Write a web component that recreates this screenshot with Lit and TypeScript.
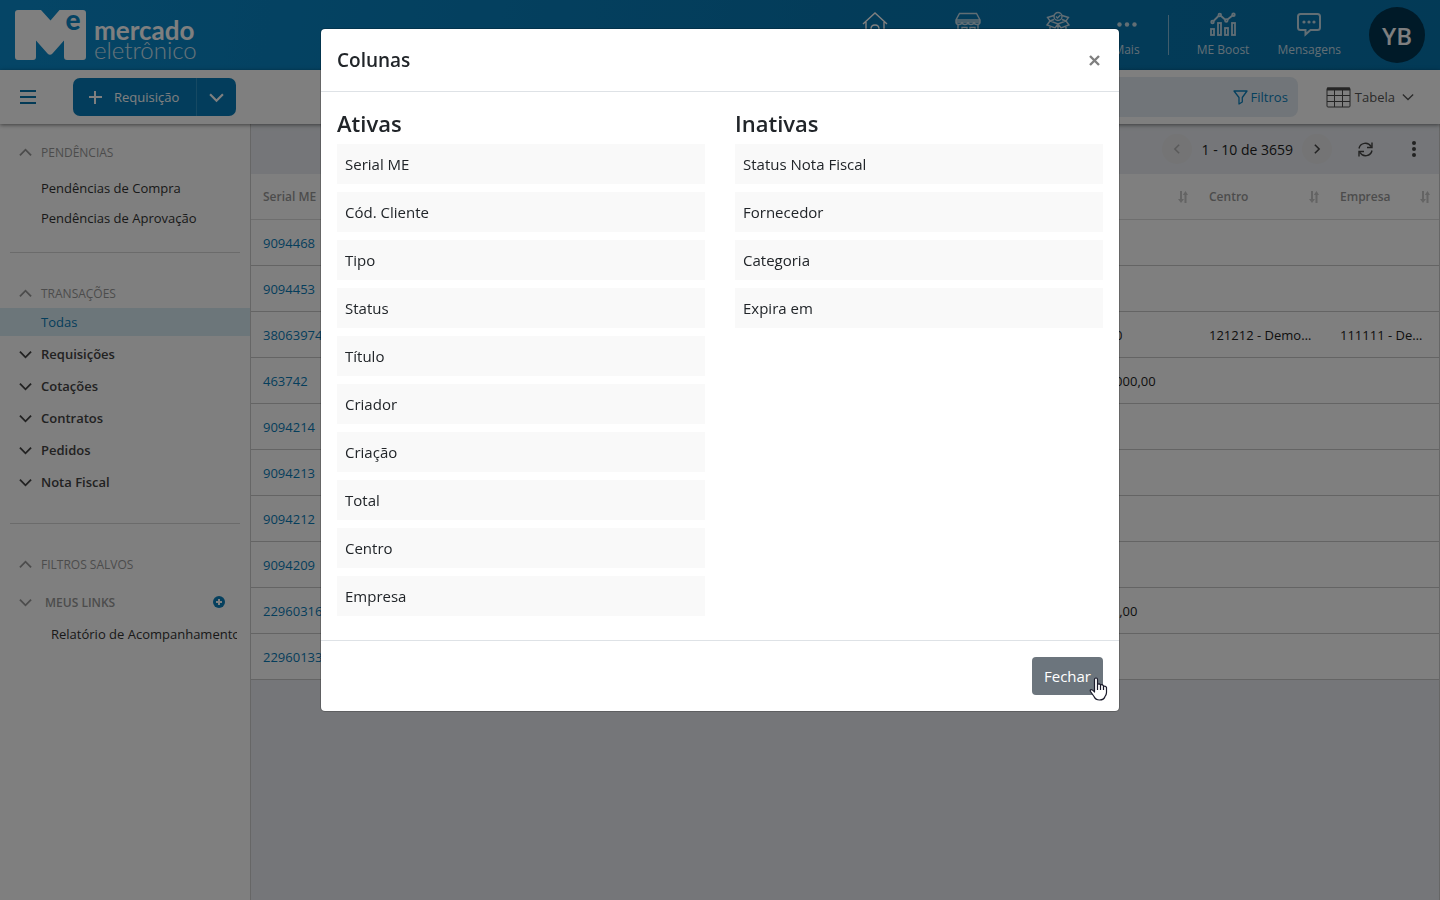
import { LitElement, html, css, svg, nothing } from "lit";
import { customElement, state } from "lit/decorators.js";

const chevron = (dir: "up" | "down" | "left" | "right", size = 13, weight = 2) => {
  const paths = {
    up: "M1 10 L7 4 L13 10",
    down: "M1 4 L7 10 L13 4",
    left: "M9.5 2 L4.5 7 L9.5 12",
    right: "M4.5 2 L9.5 7 L4.5 12",
  };
  return html`<svg width=${size} height=${size} viewBox="0 0 14 14" fill="none" stroke="currentColor" stroke-width=${weight} aria-hidden="true"><path d=${paths[dir]}></path></svg>`;
};

const icons = {
  home: svg`<path d="M1 13 L13 2 L25 13 M4 11 V26 H9 V18 Q9 14 13 14 Q17 14 17 18 V26 H22 V11"></path>`,
  store: svg`<path d="M4.500 2.500 H21.500 L25 9 V11 H1 V9 Z M1 9 H25 M1 11 Q1 13.500 4 13.500 Q7 13.500 7 11 Q7 13.500 10 13.500 Q13 13.500 13 11 Q13 13.500 16 13.500 Q19 13.500 19 11 Q19 13.500 22 13.500 Q25 13.500 25 11 M3 14 V26 H23 V14 M7 26 V16.500 H12 V26 M15 16.500 H20 V22 H15 Z"></path>`,
  box: svg`<circle cx="13" cy="5.500" r="4"></circle><path d="M11 5.500 L12.500 7 L15.500 4 M9 4.500 L2.500 6.500 L5 10 L13 13 L21 10 L23.500 6.500 L17 4.500 M5 10 L2 14 L10 17 L13 13 L16 17 L24 14 L21 10 M5 16 V23 L13 26 L21 23 V16 M13 14 V26 M5 10 L9 8.500 M21 10 L17 8.500"></path>`,
  more: svg`<g fill="currentColor" stroke="none"><circle cx="5.500" cy="13.500" r="2.200"></circle><circle cx="13" cy="13.500" r="2.200"></circle><circle cx="20.500" cy="13.500" r="2.200"></circle></g>`,
  boost: svg`<g stroke-width="1.800"><rect x="1" y="18" width="3" height="6"></rect><rect x="8" y="12" width="3" height="12"></rect><rect x="15" y="17" width="3" height="7"></rect><rect x="22" y="12" width="3" height="12"></rect><path d="M3.500 10 L8.500 5 M11 5 L15 8.500 M17.500 8.500 L22.500 4.500"></path><circle cx="2.500" cy="11" r="1.300"></circle><circle cx="9.800" cy="4" r="1.300"></circle><circle cx="16.300" cy="9.500" r="1.300"></circle><circle cx="23.500" cy="3.700" r="1.300"></circle></g>`,
  message: svg`<path stroke-width="2" d="M4.500 3 H21.500 Q24 3 24 5.500 V16.500 Q24 19 21.500 19 H14.500 L9.500 23.500 V19 H4.500 Q2 19 2 16.500 V5.500 Q2 3 4.500 3 Z"></path><g fill="currentColor" stroke="none"><circle cx="8" cy="11" r="1.600"></circle><circle cx="13" cy="11" r="1.600"></circle><circle cx="18" cy="11" r="1.600"></circle></g>`,
};

const sortIcon = html`<svg width="10" height="12" viewBox="0 0 10 12" aria-hidden="true"><path d="M2 0 H4 V8 H6 L3 12 L0 8 H2 Z" fill="currentColor"></path><path d="M6.500 12 V4 H4.800 L7.500 0 L10 4 H8.500 V12 Z" fill="currentColor"></path></svg>`;

@customElement("app-header")
class AppHeader extends LitElement {
  static styles = css`
    :host { display: flex; align-items: center; justify-content: space-between; height: 70px; padding: 0 15px; box-sizing: border-box; background: linear-gradient(100deg, #0a8bcd, #0778b3 60%, #0674ad); color: #fff; }
    .brand { display: flex; gap: 8px; align-items: flex-end; text-decoration: none; color: #fff; font-family: Lato, sans-serif; }
    .mark { display: block; overflow: visible; }
    .words { display: flex; flex-direction: column; line-height: 20px; }
    .bold { font-size: 26px; font-weight: 700; }
    .light { font-size: 24px; font-weight: 300; opacity: 0.8; }
    .nav { display: flex; gap: 28px; align-items: center; }
    .item { display: flex; flex-direction: column; align-items: center; gap: 3px; height: 48px; color: #c4dce9; text-decoration: none; font-size: 12px; line-height: 17px; white-space: nowrap; }
    .current { color: #fff; }
    .rule { width: 1px; height: 40px; background: #82bbd9; }
    .avatar { width: 56px; height: 56px; border: 0; border-radius: 50%; background: #003450; color: #fff; font: 600 24px "Open Sans", sans-serif; padding: 0; }
  `;
  link(name: keyof typeof icons, label: string, width: number, shown: boolean) {
    return html`<a class="item ${name === "home" ? "current" : ""}" href="#" aria-label=${label} style="min-width:${width}px">
      <svg width="26" height="27" viewBox="0 0 26 27" fill="none" stroke="currentColor" stroke-width="1.400" aria-hidden="true">${icons[name]}</svg>
      ${shown ? html`<span>${label}</span>` : nothing}
    </a>`;
  }
  render() {
    return html`
      <a class="brand" href="#">
        <svg class="mark" width="71" height="50" viewBox="0 0 71 50" aria-hidden="true">
          <path d="M3 0 H26 L35.500 10.500 L44.500 0 H68 Q71 0 71 3 V47 Q71 50 68 50 H52 Q49 50 49 47 V30.500 L37.500 43.500 Q35 46 32.500 43.500 L21 30.500 V47 Q21 50 18 50 H3 Q0 50 0 47 V3 Q0 0 3 0 Z" fill="#fff"></path>
          <text x="58" y="20" text-anchor="middle" font-family="Lato" font-weight="900" font-size="28" fill="#0a87c7">e</text>
        </svg>
        <span class="words"><span class="bold">mercado</span><span class="light">eletrônico</span></span>
      </a>
      <nav class="nav">
        ${this.link("home", "Início", 60, false)}
        ${this.link("store", "Loja", 70, false)}
        ${this.link("box", "Produtos", 54, false)}
        ${this.link("more", "Mais", 26, true)}
        <span class="rule"></span>
        ${this.link("boost", "ME Boost", 50, true)}
        ${this.link("message", "Mensagens", 60, true)}
        <button class="avatar">YB</button>
      </nav>`;
  }
}

@customElement("app-toolbar")
class AppToolbar extends LitElement {
  static styles = css`
    :host { display: flex; align-items: center; height: 54px; padding: 0 26px 0 20px; box-sizing: border-box; background: #fff; box-shadow: 0 1px 4px rgba(0, 0, 0, 0.5); position: relative; font-size: 13px; }
    button { font: inherit; border: 0; background: none; padding: 0; display: flex; align-items: center; }
    .menu { color: #0674ad; width: 53px; }
    .split { display: flex; height: 38px; border-radius: 7px; overflow: hidden; background: #067bb8; }
    .split button { color: #fff; }
    .new { width: 123px; gap: 12px; justify-content: flex-start; box-sizing: border-box; padding-left: 16px; }
    .drop { width: 40px; justify-content: center; border-left: 1px solid #2c93c6; box-sizing: border-box; }
    .search { display: flex; align-items: center; flex: 1; height: 40px; margin: 0 28px 0 124px; padding-right: 10px; border-radius: 8px; background: #e3ebf2; }
    .search input { flex: 1; min-width: 0; border: 0; background: none; outline: 0; height: 30px; }
    .filter { color: #0a80bd; gap: 3px; }
    .view { gap: 4px; color: #555; }
    .view .arrow { margin-left: 3px; display: flex; }
  `;
  render() {
    return html`
      <button class="menu" aria-label="Menu"><svg width="16" height="14" viewBox="0 0 16 14" stroke="currentColor" stroke-width="2"><path d="M0 1 H16 M0 7 H16 M0 13 H16"></path></svg></button>
      <div class="split">
        <button class="new"><svg width="13" height="13" viewBox="0 0 13 13" stroke="currentColor" stroke-width="2"><path d="M0 6 H13 M6 0 V13"></path></svg>Requisição</button>
        <button class="drop" aria-label="Mais opções">${chevron("down", 15)}</button>
      </div>
      <div class="search">
        <input type="search" aria-label="Pesquisar" />
        <button class="filter"><svg width="15" height="15" viewBox="0 0 15 15" fill="none" stroke="currentColor" stroke-width="1.300" stroke-linejoin="round"><path d="M1 1 H14 L9.300 7.500 V12 L6 14 V7.500 Z"></path></svg>Filtros</button>
      </div>
      <button class="view">
        <svg width="25" height="21" viewBox="0 0 25 21" fill="none" stroke="#4a4a4a"><rect x="1" y="1" width="23" height="19" rx="1"></rect><path d="M1 2 H24" stroke-width="3"></path><path d="M1 8.500 H24 M1 14.500 H24 M8.500 2 V20 M16.500 2 V20"></path></svg>
        Tabela<span class="arrow">${chevron("down", 12, 1.5)}</span>
      </button>`;
  }
}

@customElement("app-sidebar")
class AppSidebar extends LitElement {
  static styles = css`
    :host { display: block; width: 251px; flex: none; box-sizing: border-box; padding-top: 16px; background: #fff; border-right: 1px solid #ccc; font-size: 13px; }
    .head { display: flex; align-items: center; width: 100%; height: 24px; padding: 0 25px 0 19px; box-sizing: border-box; gap: 9px; border: 0; background: none; font: 12px "Open Sans", sans-serif; color: #999; text-align: left; }
    .grey { display: flex; align-items: center; gap: 9px; flex: 1; border: 0; background: none; padding: 0; font: inherit; color: inherit; }
    .links { margin-top: 14px; font-weight: 600; font-size: 12px; }
    .links .grey { gap: 13px; }
    .plus { display: flex; border: 0; padding: 0; background: none; }
    .list { margin-top: 9px; }
    .link { display: block; line-height: 30px; margin: 0 13px 0 41px; color: #333; text-decoration: none; overflow: hidden; white-space: nowrap; }
    .nested { margin: 5px 13px 0 51px; }
    .all { display: block; margin: 3px 0 2px; padding-left: 41px; line-height: 28px; background: #d9edf5; color: #0a7cb8; text-decoration: none; }
    .group { display: flex; align-items: center; gap: 9px; width: 100%; height: 32px; padding: 0 19px; border: 0; background: none; font: 600 13px "Open Sans", sans-serif; color: #444; }
    hr { border: 0; height: 1px; background: #d6d6d6; margin: 19px 10px 28px; }
    .second { margin-top: 25px; }
  `;
  render() {
    return html`
      <button class="head">${chevron("up")}PENDÊNCIAS</button>
      <div class="list"><a class="link" href="#">Pendências de Compra</a><a class="link" href="#">Pendências de Aprovação</a></div>
      <hr />
      <button class="head">${chevron("up")}TRANSAÇÕES</button>
      <a class="all" href="#">Todas</a>
      ${["Requisições", "Cotações", "Contratos", "Pedidos", "Nota Fiscal"].map((t) => html`<button class="group">${chevron("down")}${t}</button>`)}
      <hr class="second" />
      <button class="head">${chevron("up")}FILTROS SALVOS</button>
      <div class="head links">
        <button class="grey">${chevron("down")}MEUS LINKS</button>
        <button class="plus" aria-label="Adicionar link"><svg width="12" height="12" viewBox="0 0 12 12"><circle cx="6" cy="6" r="6" fill="#0a80bd"></circle><path d="M6 3 V9 M3 6 H9" stroke="#fff" stroke-width="2"></path></svg></button>
      </div>
      <a class="link nested" href="#">Relatório de Acompanhamento</a>`;
  }
}

type Row = { id: string; total?: string; centro?: string; empresa?: string };
const rows: Row[] = [
  { id: "9094468" },
  { id: "9094453" },
  { id: "38063974", total: "R$ 0,00", centro: "121212 - Demonstração", empresa: "111111 - Demonstração" },
  { id: "463742", total: "R$ 10.000,00" },
  { id: "9094214" },
  { id: "9094213" },
  { id: "9094212" },
  { id: "9094209" },
  { id: "22960316", total: "R$ 100,00" },
  { id: "22960133" },
];

@customElement("app-table")
class AppTable extends LitElement {
  static styles = css`
    :host { display: block; flex: 1; min-width: 0; background: #eaedf2; border-right: 1px solid #ccc; font-size: 13px; }
    .bar { display: flex; align-items: center; justify-content: flex-end; height: 50px; padding-right: 17px; }
    .bar button { border: 0; background: none; padding: 0; display: flex; align-items: center; justify-content: center; color: #444; }
    .bar .round { width: 30px; height: 30px; border-radius: 50%; background: #e8e8ea; }
    .bar .round:disabled { color: #b4b4b4; }
    .range { margin: 0 9px; color: #222; font-size: 14px; }
    .bar .refresh { margin: 0 33px 0 26px; }
    table { width: 100%; table-layout: fixed; border-collapse: collapse; background: #fff; }
    .wide { width: 131px; }
    .last { width: 111px; }
    th, td { height: 45px; padding: 0 9px 0 12px; border-bottom: 1px solid #c8c8c8; text-align: left; overflow: hidden; text-overflow: ellipsis; white-space: nowrap; color: #222; }
    th { color: #999; font-size: 12px; font-weight: 600; border-color: #ddd; }
    .title { display: flex; justify-content: space-between; align-items: center; color: #999; }
    .title svg { color: #c8c8c8; }
    td a { color: #0a7cb8; text-decoration: none; }
  `;
  render() {
    return html`
      <div class="bar">
        <button class="round" disabled aria-label="Anterior">${chevron("left", 12, 1.8)}</button>
        <span class="range">1 - 10 de 3659</span>
        <button class="round" aria-label="Próxima">${chevron("right", 12, 1.8)}</button>
        <button class="refresh" aria-label="Atualizar"><svg width="15" height="15" viewBox="0 0 15 15" fill="none" stroke="currentColor" stroke-width="1.400"><path d="M1 6.500 A6.500 6.500 0 0 1 13 4.500 M14 0.500 V5.500 H9 M14 8.500 A6.500 6.500 0 0 1 2 10.500 M1 14.500 V9.500 H6"></path></svg></button>
        <button aria-label="Opções"><svg width="16" height="16" viewBox="0 0 16 16" fill="currentColor"><circle cx="8" cy="2" r="2"></circle><circle cx="8" cy="8" r="2"></circle><circle cx="8" cy="14" r="2"></circle></svg></button>
      </div>
      <table>
        <colgroup><col class="wide" /><col /><col class="wide" /><col class="wide" /><col class="last" /></colgroup>
        <thead><tr>
          <th>Serial ME</th><th></th>
          ${["Total", "Centro", "Empresa"].map((t) => html`<th><span class="title">${t}${sortIcon}</span></th>`)}
        </tr></thead>
        <tbody>
          ${rows.map((r) => html`<tr><td><a href="#">${r.id}</a></td><td></td><td>${r.total}</td><td>${r.centro}</td><td>${r.empresa}</td></tr>`)}
        </tbody>
      </table>`;
  }
}

@customElement("columns-dialog")
class ColumnsDialog extends LitElement {
  static styles = css`
    :host { position: fixed; inset: 0; background: rgba(0, 0, 0, 0.5); padding: 28px 16px; font-size: 15px; color: #212529; overflow: auto; }
    .modal { max-width: 800px; margin: 0 auto; box-sizing: border-box; background: #fff; background-clip: padding-box; border: 1px solid rgba(0, 0, 0, 0.2); border-radius: 5px; }
    header { display: flex; align-items: center; justify-content: space-between; padding: 16px; height: 63px; box-sizing: border-box; border-bottom: 1px solid #dee2e6; }
    h2, h3 { margin: 0; font-weight: 600; }
    h2 { font-size: 19px; line-height: 30px; }
    h3 { font-size: 22px; line-height: 30px; }
    .close { display: flex; border: 0; padding: 3px; background: none; color: #7f7f7f; }
    .body { display: grid; grid-template-columns: 1fr 1fr; gap: 30px; padding: 16px 16px 24px; }
    .body ul { list-style: none; margin: 6px 0 0; padding: 0; display: grid; gap: 8px; }
    .body li { background: #f9f9f9; padding: 0 8px; line-height: 40px; }
    footer { display: flex; justify-content: flex-end; padding: 16px; border-top: 1px solid #dee2e6; }
    .action { position: relative; display: flex; }
    .action button { height: 38px; padding: 0 12px; border: 0; border-radius: 4px; background: #6c757d; color: #fff; font: 15px "Open Sans", sans-serif; }
    .pointer { position: absolute; right: -5px; bottom: -6px; }
  `;
  @state() active = ["Serial ME", "Cód. Cliente", "Tipo", "Status", "Título", "Criador", "Criação", "Total", "Centro", "Empresa"];
  @state() inactive = ["Status Nota Fiscal", "Fornecedor", "Categoria", "Expira em"];
  list(title: string, items: string[]) {
    return html`<section><h3>${title}</h3><ul>${items.map((i) => html`<li>${i}</li>`)}</ul></section>`;
  }
  render() {
    return html`<div class="modal" role="dialog" aria-modal="true" aria-labelledby="title">
      <header><h2 id="title">Colunas</h2><button class="close" aria-label="Fechar"><svg width="11" height="11" viewBox="0 0 11 11" stroke="currentColor" stroke-width="2.400"><path d="M1 1 L10 10 M10 1 L1 10"></path></svg></button></header>
      <div class="body">${this.list("Ativas", this.active)}${this.list("Inativas", this.inactive)}</div>
      <footer><div class="action"><button>Fechar</button>
        <svg class="pointer" width="19" height="24" viewBox="0 0 19 24" fill="#fff" stroke="#1a1a2a" stroke-width="1.200" stroke-linejoin="round" aria-hidden="true"><path d="M5.500 15 V2.500 Q5.500 1 7 1 Q8.500 1 8.500 2.500 V9 V7.500 Q10 6 11.500 7.800 V9.500 V8 Q13.200 7 14.500 8.800 V10.500 V9.500 Q16.500 8.500 17.500 10.500 V15.500 Q17.500 17.500 16 19.500 Q15 23 10.500 23 Q6.500 23 5 19.500 L1.500 14.500 Q0.800 13 2 12.600 Q3.500 12.300 5.500 15 Z"></path><path d="M8.500 9 V13 M11.500 9.500 V13 M14.500 10.500 V13" fill="none"></path></svg>
      </div></footer>
    </div>`;
  }
}

@customElement("app-root")
class AppRoot extends LitElement {
  static styles = css`
    :host { display: flex; flex-direction: column; min-height: 100vh; font-family: "Open Sans", "Noto Sans", sans-serif; }
    .main { display: flex; flex: 1; }
  `;
  render() {
    return html`<app-header></app-header><app-toolbar></app-toolbar>
      <div class="main"><app-sidebar></app-sidebar><app-table></app-table></div>
      <columns-dialog></columns-dialog>`;
  }
}
